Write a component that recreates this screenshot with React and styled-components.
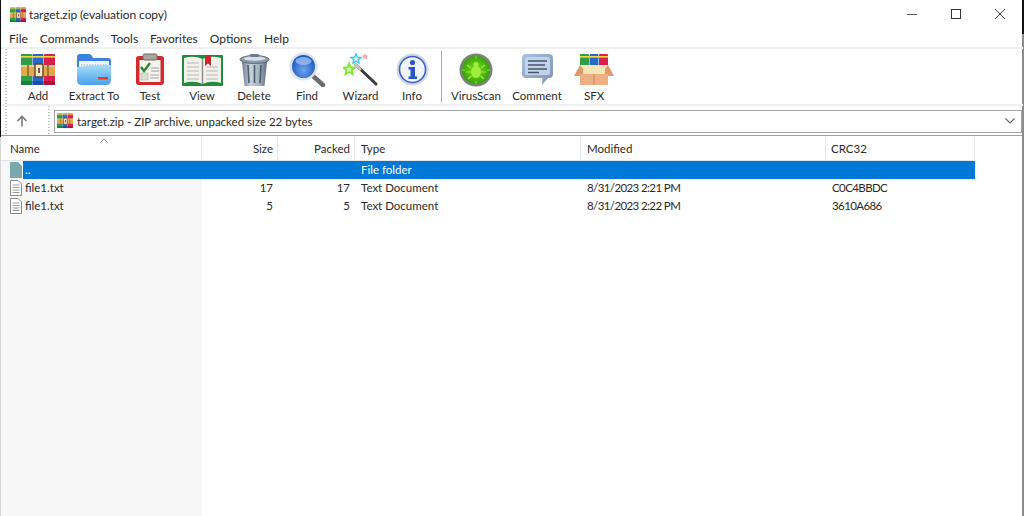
import React from "react";
import styled, { createGlobalStyle } from "styled-components";

const FONT = `Lato, "Noto Sans", sans-serif`;

const GlobalStyle = createGlobalStyle`
  html, body {
    margin: 0;
    padding: 0;
    height: 100%;
    background: #fff;
    overflow: hidden;
  }
  #root { height: 100%; }
  * { box-sizing: border-box; }
`;

function RarIcon({ size = 16 }) {
  return (
    <svg width={size} height={size} viewBox="0 0 34 32">
      <rect x="0" y="0" width="11" height="31" rx="1" fill="#2f9e44" />
      <rect x="11.5" y="0" width="11" height="31" rx="1" fill="#2768c9" />
      <rect x="23" y="0" width="11" height="31" rx="1" fill="#d8204a" />
      <rect x="0" y="2" width="34" height="1.6" fill="#f2d64b" />
      <rect x="0" y="27" width="11" height="4" fill="#17803a" />
      <rect x="11.5" y="27" width="11" height="4" fill="#1a4fa5" />
      <rect x="23" y="27" width="11" height="4" fill="#b01238" />
      <rect x="0" y="11" width="34" height="11" fill="#e0a850" />
      <rect x="0" y="11" width="34" height="2" fill="#f2c985" />
      <rect x="6" y="11" width="2" height="11" fill="#a87428" />
      <rect x="26" y="11" width="2" height="11" fill="#a87428" />
      <rect x="14" y="10" width="8" height="13" rx="1" fill="#f4e7cf" stroke="#5e4522" strokeWidth="1.4" />
      <rect x="17" y="14" width="2" height="5" fill="#7a5a2a" />
    </svg>
  );
}

function ExtractIcon() {
  return (
    <svg width="36" height="33" viewBox="0 0 36 33">
      <defs>
        <linearGradient id="folderFront" x1="0" y1="0" x2="0" y2="1">
          <stop offset="0" stopColor="#a5dcfa" />
          <stop offset="1" stopColor="#4aa2ea" />
        </linearGradient>
      </defs>
      <path d="M1 4 Q1 1 4 1 H13 Q15 1 16 3 L17 5 H32 Q35 5 35 8 V14 H1 Z" fill="#3b82e0" />
      <rect x="3" y="8" width="30" height="12" fill="#f2f5f8" />
      <path d="M5 12 H31" stroke="#9aa7b4" strokeWidth="1" strokeDasharray="1.5 1.2" />
      <path d="M1 14 Q12 13 18 12 H35 V27 Q35 32 30 32 H6 Q1 32 1 27 Z" fill="url(#folderFront)" />
      <rect x="22" y="24" width="10" height="2.5" fill="#e23b2e" />
    </svg>
  );
}

function TestIcon() {
  return (
    <svg width="30" height="33" viewBox="0 0 30 33">
      <rect x="1" y="3" width="28" height="29" rx="3" fill="#d42a2e" />
      <rect x="4.5" y="7" width="21" height="22" fill="#f6f4ee" />
      <rect x="8" y="1" width="14" height="6" rx="1.5" fill="#a9a59c" stroke="#6d6a63" strokeWidth="1" />
      <path d="M6 14 L9 18 L15 10" fill="none" stroke="#2b8a2f" strokeWidth="2.4" />
      <path d="M16 15 H24 M16 18 H24" stroke="#9b9b9b" strokeWidth="1" />
      <rect x="6" y="20" width="7" height="7" fill="#dedcd6" stroke="#aaa" strokeWidth="0.6" />
      <path d="M15 22 H24 M15 25 H24" stroke="#a5a5a5" strokeWidth="1" />
    </svg>
  );
}

function ViewIcon() {
  return (
    <svg width="41" height="32" viewBox="0 0 41 32">
      <rect x="0" y="1" width="41" height="31" rx="1" fill="#1f8d3b" />
      <path d="M2 4 Q12 1 20.5 5 Q29 1 39 4 V29 Q29 26 20.5 30 Q12 26 2 29 Z" fill="#f2f0ea" />
      <path d="M20.5 5 V30" stroke="#8c8a84" strokeWidth="1.4" />
      <path d="M5 9 H17 M5 13 H17 M5 17 H17 M5 21 H17 M5 25 H17 M24 13 H36 M24 17 H36 M24 21 H36 M24 25 H36" stroke="#b9b7b1" strokeWidth="1" />
      <path d="M23 1 H29 V12 L26 9.5 L23 12 Z" fill="#c9272d" />
    </svg>
  );
}

function DeleteIcon() {
  return (
    <svg width="31" height="34" viewBox="0 0 31 34">
      <defs>
        <linearGradient id="binBody" x1="0" y1="0" x2="1" y2="0">
          <stop offset="0" stopColor="#6f7f92" />
          <stop offset="0.35" stopColor="#c8d2dd" />
          <stop offset="0.7" stopColor="#a1afbf" />
          <stop offset="1" stopColor="#5f6e80" />
        </linearGradient>
      </defs>
      <path d="M3 9 H28 L25.5 33 H5.5 Z" fill="url(#binBody)" />
      <path d="M9 12 L10 30 M15.5 12 V30 M22 12 L21 30" stroke="#4f5c6c" strokeWidth="1.6" />
      <ellipse cx="15.5" cy="6.5" rx="14.5" ry="4" fill="#8e9bab" stroke="#5f6c7c" strokeWidth="1" />
      <ellipse cx="15.5" cy="5.5" rx="11" ry="2.2" fill="#d8dfe7" />
      <rect x="11" y="1" width="9" height="3" rx="1" fill="#6f7c8c" />
    </svg>
  );
}

function FindIcon() {
  return (
    <svg width="37" height="35" viewBox="0 0 37 35">
      <defs>
        <radialGradient id="lens" cx="0.5" cy="0.65" r="0.6">
          <stop offset="0" stopColor="#6ea4ec" />
          <stop offset="1" stopColor="#1b58c2" />
        </radialGradient>
      </defs>
      <path d="M24 24 L34 33" stroke="#6a6e73" strokeWidth="4.5" strokeLinecap="round" />
      <circle cx="14.5" cy="14.5" r="14" fill="#dbe4ec" />
      <circle cx="14.5" cy="14.5" r="11.5" fill="url(#lens)" />
      <ellipse cx="14.5" cy="9" rx="8" ry="4" fill="#9dbff0" opacity="0.8" />
    </svg>
  );
}

function WizardIcon() {
  return (
    <svg width="35" height="33" viewBox="0 0 35 33">
      <path d="M13 12 L33 31" stroke="#3a3a3a" strokeWidth="3" strokeLinecap="round" />
      <path d="M13 12 L17 16" stroke="#c5c5c5" strokeWidth="3" strokeLinecap="round" />
      <path transform="translate(0.5 3.5) scale(0.8)" d="M7 9 L9 13.5 L14 14 L10.3 17 L11.5 22 L7 19.4 L2.5 22 L3.7 17 L0 14 L5 13.5 Z" fill="#dcfcc0" stroke="#82e835" strokeWidth="2.4" />
      <path transform="translate(-5 0)" d="M18 1 L19.3 4.2 L23 4.5 L20.2 6.6 L21 10 L18 8.2 L15 10 L15.8 6.6 L13 4.5 L16.7 4.2 Z" fill="#d8f6ff" stroke="#37c8ef" strokeWidth="1.4" />
      <path transform="translate(-6 0)" d="M28 0 L29 2.2 L31.5 2.5 L29.6 4 L30.2 6.5 L28 5.2 L25.8 6.5 L26.4 4 L24.5 2.5 L27 2.2 Z" fill="#f7a9b4" />
    </svg>
  );
}

function InfoIcon() {
  return (
    <svg width="33" height="33" viewBox="0 0 33 33">
      <circle cx="16.5" cy="16.5" r="16" fill="#d3d9e2" />
      <circle cx="16.5" cy="16.5" r="13" fill="#f1f4fa" stroke="#3c63c9" strokeWidth="1.6" />
      <circle cx="16.5" cy="9.5" r="2.6" fill="#2a55c4" />
      <path d="M12.5 14 H19 V23.5 H21 V26 H12.5 V23.5 H14.5 V16.5 H12.5 Z" fill="#2a55c4" />
    </svg>
  );
}

function VirusIcon() {
  return (
    <svg width="34" height="34" viewBox="0 0 34 34">
      <defs>
        <radialGradient id="virusDisc" cx="0.5" cy="0.5" r="0.5">
          <stop offset="0" stopColor="#78e01c" />
          <stop offset="1" stopColor="#38a30c" />
        </radialGradient>
      </defs>
      <circle cx="17" cy="17" r="16.5" fill="#7d817a" />
      <circle cx="17" cy="17" r="14" fill="url(#virusDisc)" />
      <ellipse cx="17" cy="19" rx="5" ry="6" fill="#a4ec3c" />
      <circle cx="17" cy="11.5" r="2.6" fill="#a4ec3c" />
      <path d="M12 15 L8 12 M12 19 H7 M12.5 23 L9 26 M22 15 L26 12 M22 19 H27 M21.5 23 L25 26" stroke="#a4ec3c" strokeWidth="1.2" />
      <path d="M17 3 V6 M17 28 V31 M3 17 H6 M28 17 H31" stroke="#8fe03a" strokeWidth="1" />
    </svg>
  );
}

function CommentIcon() {
  return (
    <svg width="33" height="33" viewBox="0 0 33 33">
      <defs>
        <linearGradient id="bubble" x1="0" y1="0" x2="1" y2="1">
          <stop offset="0" stopColor="#a9c1e2" />
          <stop offset="1" stopColor="#7a93b8" />
        </linearGradient>
      </defs>
      <path d="M5 1 H28 Q32 1 32 5 V21 Q32 25 28 25 H27 L21 32 L21.5 25 H5 Q1 25 1 21 V5 Q1 1 5 1 Z" fill="url(#bubble)" />
      <rect x="4" y="4" width="25" height="18" rx="2.5" fill="#c3d3e8" />
      <path d="M7 8 H26 M7 12 H24 M7 16 H26 M7 19.5 H18" stroke="#46566e" strokeWidth="1.6" />
    </svg>
  );
}

function SfxIcon() {
  return (
    <svg width="40" height="33" viewBox="0 0 40 33">
      <rect x="6" y="1" width="9" height="14" rx="1" fill="#2f9e44" />
      <rect x="15.5" y="1" width="9" height="14" rx="1" fill="#2768c9" />
      <rect x="25" y="1" width="9" height="14" rx="1" fill="#d8204a" />
      <rect x="6" y="3" width="28" height="1.6" fill="#f2d64b" />
      <path d="M6 12 H34 V28 H6 Z" fill="#f6e6b8" />
      <path d="M6 12 L0 23 H9 V16 Z M34 12 L40 23 H31 V16 Z" fill="#dd9a6a" />
      <path d="M6 21 H34 V32 H6 Z" fill="#eeb083" />
      <path d="M20 21 V32" stroke="#c58859" strokeWidth="1" />
    </svg>
  );
}

const tools = [
  { label: "Add", width: 44, icon: <RarIcon size={34} /> },
  { label: "Extract To", width: 68, icon: <ExtractIcon /> },
  { label: "Test", width: 44, icon: <TestIcon /> },
  { label: "View", width: 60, icon: <ViewIcon /> },
  { label: "Delete", width: 44, icon: <DeleteIcon /> },
  { label: "Find", width: 62, icon: <FindIcon /> },
  { label: "Wizard", width: 45, icon: <WizardIcon /> },
  { label: "Info", width: 58, icon: <InfoIcon /> },
];

const tools2 = [
  { label: "VirusScan", width: 68, icon: <VirusIcon /> },
  { label: "Comment", width: 54, icon: <CommentIcon /> },
  { label: "SFX", width: 60, icon: <SfxIcon /> },
];

const columns = [
  { label: "Name", align: "left" },
  { label: "Size", align: "right" },
  { label: "Packed", align: "right" },
  { label: "Type", align: "left" },
  { label: "Modified", align: "left" },
  { label: "CRC32", align: "left" },
];

const files = [
  { name: "file1.txt", size: "17", packed: "17", modified: "8/31/2023 2:21 PM", crc: "C0C4BBDC" },
  { name: "file1.txt", size: "5", packed: "5", modified: "8/31/2023 2:22 PM", crc: "3610A686" },
];

export default function App() {
  return (
    <Window>
      <GlobalStyle />
      <TitleBar>
        <RarIcon size={16} />
        <TitleText>target.zip (evaluation copy)</TitleText>
        <WindowControls>
          <WindowButton>
            <svg width="10" height="10" viewBox="0 0 10 10">
              <path d="M0 5.5 H10" stroke="#555" strokeWidth="1" />
            </svg>
          </WindowButton>
          <WindowButton>
            <svg width="10" height="10" viewBox="0 0 10 10">
              <rect x="0.5" y="0.5" width="9" height="9" fill="none" stroke="#333" strokeWidth="1" />
            </svg>
          </WindowButton>
          <WindowButton>
            <svg width="10" height="10" viewBox="0 0 10 10">
              <path d="M0 0 L10 10 M10 0 L0 10" stroke="#444" strokeWidth="1" />
            </svg>
          </WindowButton>
        </WindowControls>
      </TitleBar>

      <MenuBar>
        {["File", "Commands", "Tools", "Favorites", "Options", "Help"].map((m) => (
          <MenuItem key={m}>{m}</MenuItem>
        ))}
      </MenuBar>

      <Toolbar>
        <Grip />
        {tools.map((t) => (
          <ToolButton key={t.label} $width={t.width}>
            <ToolIcon>{t.icon}</ToolIcon>
            <ToolLabel>{t.label}</ToolLabel>
          </ToolButton>
        ))}
        <Separator />
        {tools2.map((t) => (
          <ToolButton key={t.label} $width={t.width}>
            <ToolIcon>{t.icon}</ToolIcon>
            <ToolLabel>{t.label}</ToolLabel>
          </ToolButton>
        ))}
      </Toolbar>

      <AddressRow>
        <Grip />
        <UpButton>
          <svg width="12" height="12" viewBox="0 0 12 12">
            <path d="M6 11.5 V1.5 M1.5 6 L6 1.5 L10.5 6" fill="none" stroke="#7a7a7a" strokeWidth="1.6" />
          </svg>
        </UpButton>
        <Grip />
        <AddressBox>
          <RarIcon size={16} />
          <AddressText>target.zip - ZIP archive, unpacked size 22 bytes</AddressText>
          <svg width="10" height="6" viewBox="0 0 10 6">
            <path d="M0.5 0.5 L5 5 L9.5 0.5" fill="none" stroke="#666" strokeWidth="1.2" />
          </svg>
        </AddressBox>
      </AddressRow>

      <ListPanel>
        <HeaderRow>
          {columns.map((c) => (
            <HeaderCell key={c.label} $align={c.align}>{c.label}</HeaderCell>
          ))}
          <SortCaret>
            <svg width="8" height="5" viewBox="0 0 8 5">
              <path d="M0.5 4.5 L4 1 L7.5 4.5" fill="none" stroke="#999" strokeWidth="1" />
            </svg>
          </SortCaret>
        </HeaderRow>

        <Row>
          <NameCell>
            <svg width="12" height="18" viewBox="0 0 12 18">
              <path d="M0 1 H8 L12 5 V17 H0 Z" fill="#79a9ac" />
            </svg>
            <SelectedName>..</SelectedName>
          </NameCell>
          <SelectedCell />
          <SelectedCell />
          <SelectedCell>File folder</SelectedCell>
          <SelectedCell />
          <SelectedCell />
        </Row>

        {files.map((f) => (
          <Row key={f.crc}>
            <NameCell>
              <svg width="12" height="16" viewBox="0 0 12 16">
                <path d="M0.5 0.5 H8 L11.5 4 V15.5 H0.5 Z" fill="#fff" stroke="#8a8a8a" />
                <path d="M2.5 5 H9.5 M2.5 7.5 H9.5 M2.5 10 H9.5 M2.5 12.5 H9.5" stroke="#9a9a9a" />
              </svg>
              <FileName>{f.name}</FileName>
            </NameCell>
            <Cell $align="right">{f.size}</Cell>
            <Cell $align="right">{f.packed}</Cell>
            <Cell>Text Document</Cell>
            <Cell $tight>{f.modified}</Cell>
            <Cell $tight>{f.crc}</Cell>
          </Row>
        ))}
      </ListPanel>
    </Window>
  );
}

const Window = styled.div`
  width: 1024px;
  height: 516px;
  display: flex;
  flex-direction: column;
  padding: 0 1px 0 1px;
  font-family: ${FONT};
  font-size: 11.5px;
  color: #2a2a2a;
  overflow: hidden;
  background:
    linear-gradient(#111 0 137px, #d5d5d5 137px) left / 1px 100% no-repeat,
    linear-gradient(#111 0 34px, #8c8c8c 34px) right / 2px 100% no-repeat,
    #fff;
`;

const TitleBar = styled.div`
  height: 29px;
  flex: none;
  display: flex;
  align-items: center;
  padding-left: 9px;
`;

const TitleText = styled.span`
  margin-left: 3px;
  font-size: 12px;
  letter-spacing: -0.1px;
`;

const WindowControls = styled.div`
  margin-left: auto;
  display: flex;
  margin-top: -2px;
  margin-right: 1px;
`;

const WindowButton = styled.div`
  width: 44px;
  height: 26px;
  display: flex;
  align-items: center;
  justify-content: center;
`;

const MenuBar = styled.div`
  height: 18px;
  flex: none;
  display: flex;
  align-items: center;
  padding-left: 8px;
  gap: 12px;
`;

const MenuItem = styled.span`
  font-size: 12px;
`;

const Toolbar = styled.div`
  height: 59px;
  flex: none;
  display: flex;
  align-items: flex-start;
  border-top: 2px solid #f0f0f0;
  border-bottom: 2px solid #f0f0f0;
  padding-left: 4px;
`;

const Grip = styled.div`
  width: 2px;
  align-self: stretch;
  flex: none;
  margin-right: 9px;
  background: repeating-linear-gradient(#c4c4c4 0 1px, transparent 1px 3px);
`;

const ToolButton = styled.div`
  width: ${(p) => p.$width}px;
  flex: none;
  display: flex;
  flex-direction: column;
  align-items: center;
  padding-top: 3px;
`;

const ToolIcon = styled.div`
  height: 35px;
  display: flex;
  align-items: center;
  justify-content: center;
`;

const ToolLabel = styled.span`
  line-height: 16px;
  margin-top: 1px;
  white-space: nowrap;
`;

const Separator = styled.div`
  width: 1px;
  height: 51px;
  flex: none;
  margin-top: 2px;
  background: #a8a8a8;
`;

const AddressRow = styled.div`
  height: 29px;
  flex: none;
  display: flex;
  align-items: center;
  padding-left: 4px;
  padding-right: 1px;
`;

const UpButton = styled.div`
  width: 24px;
  display: flex;
  justify-content: center;
  margin-left: -6px;
  margin-right: 14px;
`;

const AddressBox = styled.div`
  flex: 1;
  height: 23px;
  margin-left: -5px;
  margin-top: 1px;
  display: flex;
  align-items: center;
  padding: 0 6px 0 2px;
  border: 1px solid #a6a6a6;
  background: #fff;
`;

const AddressText = styled.span`
  flex: 1;
  margin-left: 4px;
`;

const ListPanel = styled.div`
  flex: 1;
  min-height: 0;
  margin-right: 1px;
  border-top: 1px solid #a0a0a0;
  background: linear-gradient(to right, #f7f7f7 201px, #fff 201px);
`;

const GRID = "201px 76px 77px 226px 245px 149px";

const HeaderRow = styled.div`
  position: relative;
  display: grid;
  grid-template-columns: ${GRID};
  height: 25px;
  background: #fff;
  width: 974px;
`;

const HeaderCell = styled.div`
  display: flex;
  align-items: center;
  justify-content: ${(p) => (p.$align === "right" ? "flex-end" : "flex-start")};
  padding: 0 4px 0 6px;
  border-right: 1px solid #e5e5e5;
  border-bottom: 1px solid #e5e5e5;
  &:first-child { padding-left: 9px; }
  &:nth-child(6) { padding-left: 5px; }
`;

const SortCaret = styled.div`
  position: absolute;
  left: 99px;
  top: 2px;
  line-height: 0;
`;

const Row = styled.div`
  display: grid;
  grid-template-columns: ${GRID};
  height: 18px;
  width: 974px;
`;

const NameCell = styled.div`
  display: flex;
  align-items: center;
  padding-left: 9px;
  gap: 3px;
  min-width: 0;
`;

const Cell = styled.div`
  display: flex;
  align-items: center;
  justify-content: ${(p) => (p.$align === "right" ? "flex-end" : "flex-start")};
  padding: 0 5px 1px 6px;
  white-space: nowrap;
  letter-spacing: ${(p) => (p.$tight ? "-0.6px" : "0")};
`;

const SelectedCell = styled(Cell)`
  background: #0078d7;
  color: #fff;
`;

const SelectedName = styled.span`
  flex: 1;
  align-self: stretch;
  display: flex;
  align-items: center;
  padding: 0 0 1px 2px;
  background: #0078d7;
  color: #fff;
  margin-left: -2px;
`;

const FileName = styled.span`
  padding-bottom: 1px;
`;
